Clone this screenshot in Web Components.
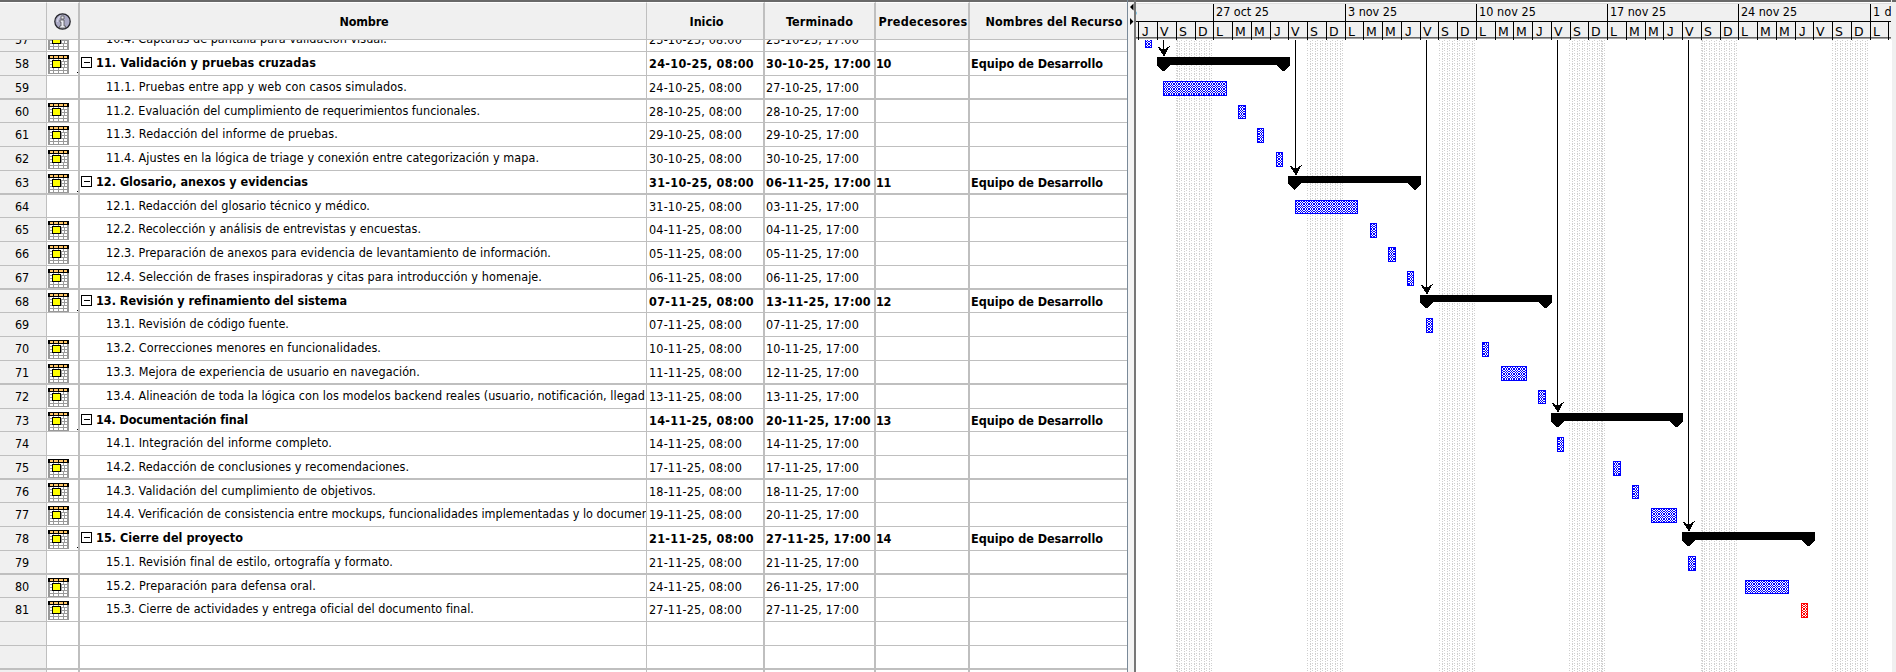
<!DOCTYPE html>
<html lang="es">
<head>
<meta charset="utf-8">
<title>Cronograma del proyecto</title>
<style>
html,body{margin:0;height:100%;background:#f0f0f0;overflow:hidden}
body{font-family:"DejaVu Sans Condensed","DejaVu Sans",sans-serif;font-size:12.5px;color:#000}
</style>
</head>
<body>
<project-view></project-view>
<script>
const E='Equipo de Desarrollo';
/* id, row height, divider thickness, icon, level, name, name width, start, end, predecessor */
const ROWS=[
[57,24,1,1,1,'10.4. Capturas de pantalla para validación visual.',281,'23-10-25','23-10-25'],
[58,24,1,1,0,'11. Validación y pruebas cruzadas',220,'24-10-25','30-10-25','10'],
[59,24,2,0,1,'11.1. Pruebas entre app y web con casos simulados.',301,'24-10-25','27-10-25'],
[60,23,1,1,1,'11.2. Evaluación del cumplimiento de requerimientos funcionales.',374,'28-10-25','28-10-25'],
[61,24,1,1,1,'11.3. Redacción del informe de pruebas.',232,'29-10-25','29-10-25'],
[62,24,1,1,1,'11.4. Ajustes en la lógica de triage y conexión entre categorización y mapa.',433,'30-10-25','30-10-25'],
[63,24,2,1,0,'12. Glosario, anexos y evidencias',212,'31-10-25','06-11-25','11'],
[64,23,1,0,1,'12.1. Redacción del glosario técnico y médico.',264,'31-10-25','03-11-25'],
[65,24,1,1,1,'12.2. Recolección y análisis de entrevistas y encuestas.',315,'04-11-25','04-11-25'],
[66,24,1,1,1,'12.3. Preparación de anexos para evidencia de levantamiento de información.',445,'05-11-25','05-11-25'],
[67,24,2,1,1,'12.4. Selección de frases inspiradoras y citas para introducción y homenaje.',436,'06-11-25','06-11-25'],
[68,23,1,1,0,'13. Revisión y refinamiento del sistema',251,'07-11-25','13-11-25','12'],
[69,24,1,0,1,'13.1. Revisión de código fuente.',183,'07-11-25','07-11-25'],
[70,24,1,1,1,'13.2. Correcciones menores en funcionalidades.',275,'10-11-25','10-11-25'],
[71,24,2,1,1,'13.3. Mejora de experiencia de usuario en navegación.',314,'11-11-25','12-11-25'],
[72,24,1,1,1,'13.4. Alineación de toda la lógica con los modelos backend reales (usuario, notificación, llegad',539,'13-11-25','13-11-25'],
[73,23,1,1,0,'14. Documentación final',152,'14-11-25','20-11-25','13'],
[74,24,1,0,1,'14.1. Integración del informe completo.',226,'14-11-25','14-11-25'],
[75,24,2,1,1,'14.2. Redacción de conclusiones y recomendaciones.',303,'17-11-25','17-11-25'],
[76,23,1,1,1,'14.3. Validación del cumplimiento de objetivos.',270,'18-11-25','18-11-25'],
[77,24,1,1,1,'14.4. Verificación de consistencia entre mockups, funcionalidades implementadas y lo documen',543,'19-11-25','20-11-25'],
[78,24,1,1,0,'15. Cierre del proyecto',147,'21-11-25','27-11-25','14'],
[79,24,2,0,1,'15.1. Revisión final de estilo, ortografía y formato.',287,'21-11-25','21-11-25'],
[80,23,1,1,1,'15.2. Preparación para defensa oral.',210,'24-11-25','26-11-25'],
[81,24,1,1,1,'15.3. Cierre de actividades y entrega oficial del documento final.',368,'27-11-25','27-11-25'],
[0,24,1],[0,24,2],[0,24,1]
];

/* Text whose tracking is adjusted so the run takes the width in "w". */
class FitText extends HTMLElement{
  connectedCallback(){
    const r=this.attachShadow({mode:'open'});
    r.innerHTML='<style>:host{display:inline-block;white-space:pre;line-height:15px}span{display:inline-block}</style><span><slot></slot></span>';
    const w=+this.getAttribute('w'),s=r.querySelector('span'),n=this.textContent.length;
    if(w){const d=(w-s.getBoundingClientRect().width)/n;s.style.letterSpacing=d.toFixed(3)+'px';}
  }
}
customElements.define('fit-text',FitText);

class CalendarIcon extends HTMLElement{
  connectedCallback(){
    this.attachShadow({mode:'open'}).innerHTML=`<style>:host{display:block;width:21px;height:19px}svg{display:block}</style>
<svg width="21" height="19" shape-rendering="crispEdges"><rect width="21" height="19" fill="#999"/>
<path fill="#fff" d="M2 4h3v2H2zM6 4h4v2H6zM11 4h4v2h-4zM16 4h3v2h-3zM2 7h2v2H2zM14 7h2v2h-2zM17 7h2v2h-2zM2 10h2v2H2zM14 10h2v2h-2zM17 10h2v2h-2zM2 13h3v2H2zM6 13h4v2H6zM11 13h4v2h-4zM16 13h3v2h-3zM2 16h3v2H2zM6 16h4v2H6zM11 16h4v2h-4zM16 16h3v2h-3z"/>
<rect width="21" height="4"/><path fill="#ffc668" d="M2 1h3v2H2zM6 1h4v2H6zM11 1h4v2h-4zM16 1h3v2h-3z"/>
<rect x="4" y="5" width="9" height="8"/><rect x="5" y="6" width="7" height="6" fill="#ff0"/></svg>`;
  }
}
customElements.define('calendar-icon',CalendarIcon);

class InfoIcon extends HTMLElement{
  connectedCallback(){
    this.attachShadow({mode:'open'}).innerHTML=`<style>:host{display:block;width:17px;height:17px}svg{display:block}</style>
<svg width="17" height="17"><circle cx="8.5" cy="8.5" r="7.7" fill="#aaa9c4" stroke="#26262c" stroke-width="1.3"/><path d="M3.5 9A5.5 5.5 0 0 1 8 3" fill="none" stroke="#d2d2e6" stroke-width="1.6"/>
<path d="M7 3h3v3H7zM6 7h4v6h1.5v2h-6v-2H7V9H6z" fill="#e8e8f0" stroke="#555" stroke-width=".8"/></svg>`;
  }
}
customElements.define('info-icon',InfoIcon);

const COLS='grid-template-columns:46px 34px 567px 118px 111px 94px 157px;';
class SheetRow extends HTMLElement{
  connectedCallback(){
    const [id,h,b,icon,lvl,name,w,s,e,p]=this.data,bold=id&&!lvl;
    const f=(t,w)=>t?`<fit-text w="${w}">${t}</fit-text>`:'';
    this.attachShadow({mode:'open'}).innerHTML=`<style>
:host{display:grid;${COLS}flex:none;height:${h-b}px;border-bottom:${b}px solid #bfbfbf;background:#fff;font-weight:${bold?700:400}}
div{overflow:hidden;box-sizing:border-box;border-right:2px solid #bfbfbf;padding-top:4px;white-space:nowrap}
.n{background:#f0f0f0;border-right:0;text-align:center;font-weight:400;padding-right:2px}
.i{border-left:1px solid #bfbfbf;padding:3px 0 0 1px;display:flex;justify-content:space-between}
.i b{width:1px;height:1px;background:#000;margin-top:17px}
.name{display:flex;padding:3px 0 0 ${bold?1:26}px;border-right-width:1px}
.box{flex:none;width:9px;height:9px;border:1px solid #000;margin:2px 4px 0 0;display:flex;align-items:center;justify-content:center}
.box:after{content:"";width:6px;height:1px;background:#000}
.d{padding-left:2px}.t{padding-left:1px}.p{padding-left:0}.r{border-right:0;padding-left:1px}
</style>
<div class="n">${f(id||'',14)}</div><div class="i">${icon?'<calendar-icon></calendar-icon>':''}${bold?'<b></b>':''}</div>
<div class="name">${bold?'<span class="box"></span>':''}${f(name,w)}</div>
<div class="d">${s?f(s+', 08:00',bold?105:93):''}</div><div class="t">${e?f(e+', 17:00',bold?105:93):''}</div>
<div class="p">${f(p,15)}</div><div class="r">${bold?f(E,132):''}</div>`;
  }
}
customElements.define('sheet-row',SheetRow);

class TaskSheet extends HTMLElement{
  connectedCallback(){
    const r=this.attachShadow({mode:'open'});
    r.innerHTML=`<style>
:host{display:flex;flex-direction:column;width:1127px;height:672px;border-right:1px solid #7a8a99;overflow:hidden}
header{flex:none;display:grid;${COLS}height:37px;border-top:2px solid #696969;border-bottom:1px solid #bfbfbf;background:#f0f0f0;font-weight:700}
header div{box-sizing:border-box;display:flex;align-items:center;justify-content:center;border-right:2px solid #bfbfbf;border-top:1px solid #fff}
header div:first-child{border-right:0}header div:nth-child(2){border-left:1px solid #bfbfbf}
header div:nth-child(3){border-right-width:1px;padding-left:2px}header div:nth-child(4){padding-left:3px}
header div:nth-child(6){padding-left:2px}
header div:last-child{border:0;border-top:1px solid #fff;padding-left:11px}
.body{flex:1;display:flex;flex-direction:column;overflow:hidden;background:#fff}
.body sheet-row:first-child{margin-top:-12px}
</style><header><div></div><div><info-icon></info-icon></div><div><fit-text w="49">Nombre</fit-text></div><div><fit-text w="34">Inicio</fit-text></div><div><fit-text w="67">Terminado</fit-text></div><div><fit-text w="89">Predecesores</fit-text></div><div><fit-text w="137">Nombres del Recurso</fit-text></div></header><div class="body"></div>`;
    const body=r.querySelector('.body');
    for(const d of ROWS){const el=document.createElement('sheet-row');el.data=d.slice();body.append(el);}
  }
}
customElements.define('task-sheet',TaskSheet);

class SplitBar extends HTMLElement{
  connectedCallback(){
    this.attachShadow({mode:'open'}).innerHTML=`<style>:host{display:block;width:6px;height:670px;border-top:2px solid #696969;background:#f4f4f4}svg{display:block}</style>
<svg width="6" height="40"><path d="M5.5 1.5v7L2 5zM2 16v7l3.5-3.5z"/></svg>`;
  }
}
customElements.define('split-bar',SplitBar);

class TimeScale extends HTMLElement{
  connectedCallback(){
    const W=[[1136,'5',7],[1213,'27 oct 25',53],[1345,'3 nov 25',49],[1476,'10 nov 25',57],[1607,'17 nov 25',56],[1738,'24 nov 25',56],[1870,'1 dic 25',48]];
    let days='',weeks='';
    for(let k=0;k<41;k++){const x=Math.ceil(1138+18.75*k),n=k==40?1891:Math.ceil(1138+18.75*(k+1)),t=k==40?'':'JVSDLMM'[k%7];
      days+=`<div${t=='J'?' class="j"':''} style="width:${n-x}px">${t}</div>`;}
    W.forEach(([x,t,w],i)=>{const n=i<6?W[i+1][0]:1891;weeks+=`<div style="width:${n-x}px"><fit-text w="${w}">${t}</fit-text></div>`;});
    this.attachShadow({mode:'open'}).innerHTML=`<style>
:host{display:block;width:755px;height:40px;overflow:hidden;background:#f0f0f0;font-size:12.5px}
.w,.d{display:flex}.w{height:17px;border-bottom:1px solid #000}
.w div,.d div{flex:none;box-sizing:border-box;border-left:1px solid #000;overflow:hidden;padding-left:2px}
.w div:first-child{border-left:0;padding:0}.w div:first-child fit-text{margin-left:-6px}
.d{height:18px;padding-left:2px;background:linear-gradient(#0000 15px,#696969 15px,#696969 16px,#a0a0a0 16px,#a0a0a0 17px,#fff 17px)}
.d div{line-height:19px;font-family:"DejaVu Sans",sans-serif;font-size:12.5px}
.d .j{font-family:"Liberation Sans",sans-serif;font-size:13px;padding-left:3px;line-height:20px}
.top{height:2px;background:#696969}.gap{height:2px;background:linear-gradient(#fff 1px,#dedede 1px)}
</style><div class="top"></div><div class="gap"></div><div class="w">${weeks}</div><div class="d">${days}</div>`;
  }
}
customElements.define('time-scale',TimeScale);

class GanttChart extends HTMLElement{
  connectedCallback(){
    const bars=[[1145,1152,33,48],[1163,1227,81,96],[1238,1246,105,119],[1257,1264,128,143],[1276,1283,152,167],[1295,1358,200,214],[1370,1377,223,238],[1388,1396,247,262],[1407,1414,271,286],[1426,1433,318,333],[1482,1489,342,357],[1501,1527,366,381],[1538,1546,390,404],[1557,1564,437,452],[1613,1621,461,476],[1632,1639,485,499],[1651,1677,508,523],[1688,1696,556,571],[1745,1789,580,594],[1801,1808,603,618,1]];
    const sums=[[1157,1290,57,65,71],[1288,1421,176,183,190],[1420,1552,295,302,308],[1551,1683,413,421,427],[1682,1815,532,540,546]];
    let c='';
    for(const [a,b] of [[1176,1213],[1307,1343],[1439,1475],[1569,1605],[1701,1738],[1832,1868]])
      c+=`<svg x="${a}" y="40" width="${b-a}" height="632"><rect width="100%" height="100%" fill="url(#we)"/></svg>`;
    for(const x of [1177,1601,1702])c+=`<path d="M${x+.5} 40V672" stroke="#d0d0d0" stroke-dasharray="2 1 1 1"/>`;
    for(const [a,b,t,u,red] of bars){
      c+=`<rect x="${a}" y="${t}" width="${b-a}" height="${u-t}" fill="#fff"/><rect x="${a}" y="${t}" width="${b-a}" height="${u-t}" fill="url(#${red?'rd':'bl'})"/><rect x="${a+.5}" y="${t+.5}" width="${b-a-1}" height="${u-t-1}" fill="none" stroke="${red?'#f00':'#00f'}"/>`;}
    for(const [a,b,t,m,p] of sums){
      const y=t-1,x=a===1288?1295:a+6;
      c+=`<path d="M${a} ${t}H${b}V${m+1}L${b-6} ${p}h-1L${b-14} ${m}H${a+13}L${a+7} ${p}h-1L${a} ${m+1}z"/>`;
      c+=`<path d="M${x} 40h1V${y-6}h-1z"/><path d="M${x+.5} ${y}L${x-5.8} ${y-10}L${x+.5} ${y-6}L${x+6.8} ${y-10}L${x+1.5} ${y}z"/>`;}
    const checker=(id,col)=>{let p='';const m=[0,1,2,3,3];for(let y=0;y<5;y++)for(let x=0;x<5;x++)if((m[x]+m[y])%2==0)p+=`M${x} ${y}h1v1h-1z`;
      return `<pattern id="${id}" width="5" height="5" patternUnits="userSpaceOnUse"><path d="${p}" fill="${col}"/></pattern>`;};
    this.attachShadow({mode:'open'}).innerHTML=`<style>:host{display:block;width:756px;height:632px;background:#fff}svg{display:block}</style>
<svg width="756" height="632" viewBox="1136 40 756 632" shape-rendering="crispEdges"><defs>${checker('bl','#00f')}${checker('rd','#f00')}
<pattern id="we" width="5" height="5" patternUnits="userSpaceOnUse"><path d="M0 0h1v1H0zM0 3h1v1H0zM3 1h1v1H3zM3 3h1v2H3z" fill="#d0d0d0"/></pattern></defs>${c}</svg>`;
  }
}
customElements.define('gantt-chart',GanttChart);

class ProjectView extends HTMLElement{
  connectedCallback(){
    this.attachShadow({mode:'open'}).innerHTML=`<style>:host{display:flex;width:1896px;height:672px;overflow:hidden;background:#f0f0f0}
.g{width:756px;border-left:2px solid #777;display:flex;flex-direction:column}.e{flex:1;height:670px;border-top:2px solid #696969}</style>
<task-sheet></task-sheet><split-bar></split-bar><div class="g"><time-scale></time-scale><gantt-chart></gantt-chart></div><div class="e"></div>`;
  }
}
customElements.define('project-view',ProjectView);
</script>
</body>
</html>
